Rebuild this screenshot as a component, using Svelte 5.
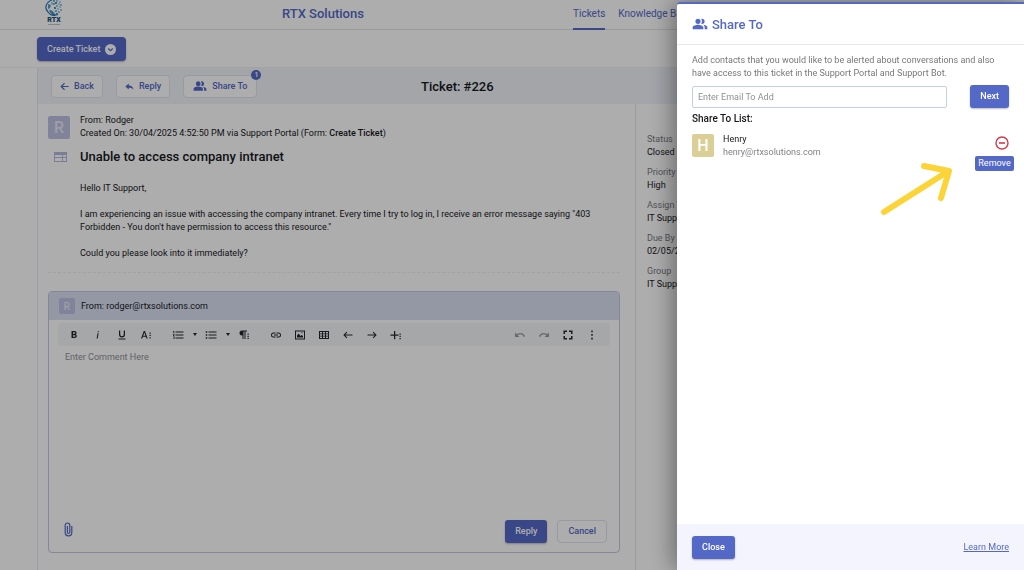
<script>
  const peoplePath =
    'M16.67 13.13C18.04 14.06 19 15.32 19 17v3h4v-3c0-2.18-3.57-3.47-6.33-3.87zM15 12c2.21 0 4-1.79 4-4s-1.79-4-4-4c-.47 0-.91.1-1.33.24C14.5 5.27 15 6.58 15 8s-.5 2.73-1.33 3.76c.42.14.86.24 1.33.24zM9 12c2.21 0 4-1.79 4-4s-1.79-4-4-4-4 1.79-4 4 1.79 4 4 4zm0 1c-2.67 0-8 1.34-8 4v3h16v-3c0-2.66-5.33-4-8-4z';

  const textTools = [
    { label: 'Bold', d: 'M15.6 10.8c1-.7 1.6-1.8 1.6-2.8 0-2.3-1.7-4-4-4H7v14h7c2.1 0 3.7-1.7 3.7-3.8 0-1.5-.9-2.8-2.1-3.4zM10 6.5h3a1.5 1.5 0 0 1 0 3h-3zm3.500 9H10v-3h3.500a1.500 1.500 0 0 1 0 3z' },
    { label: 'Italic', d: 'M11 8.500h2.200L11.400 19H9.200zM11.700 4.500h2.200l-.4 2.200h-2.200z' },
    { label: 'Underline', d: 'M12 17a6 6 0 0 0 6-6V3h-2.500v8a3.500 3.500 0 0 1-7 0V3H6v8a6 6 0 0 0 6 6zm-7 2v2h14v-2z' },
    { label: 'More text', d: 'M7.500 4 2 19h2.500l1.200-3.500h6L12.900 19h2.500L9.900 4zm-1 9.300 2.200-6.400 2.200 6.400zM19 7h2.500v2.500H19zm0 4.700h2.500v2.500H19zm0 4.700h2.500V19H19z' }
  ];
  const insertTools = [
    { label: 'Insert link', d: 'M3.900 12a3.100 3.100 0 0 1 3.100-3.100h4V7H7a5 5 0 0 0 0 10h4v-1.900H7A3.100 3.100 0 0 1 3.900 12zM8 13h8v-2H8zm9-6h-4v1.900h4a3.100 3.100 0 0 1 0 6.200h-4V17h4a5 5 0 0 0 0-10z' },
    { label: 'Insert image', d: 'M2 3v18h20V3zm18 16H4V5h16zM6 17h12v-3l-3-2-2 2-4-5-3 4zm9-8.500h2v-2h-2z' },
    { label: 'Insert table', d: 'M2 4v16h20V4zm2 2h4v3H4zm6 0h4v3h-4zm6 0h4v3h-4zM4 10.500h4v3H4zm6 0h4v3h-4zm6 0h4v3h-4zM4 15h4v3H4zm6 0h4v3h-4zm6 0h4v3h-4z' },
    { label: 'Left to right', d: 'M21 11H6.500l4-4L9 5.600 2.600 12 9 18.400l1.500-1.400-4-4H21z' },
    { label: 'Right to left', d: 'M3 11h14.500l-4-4L15 5.600l6.400 6.400-6.400 6.400-1.500-1.400 4-4H3z' },
    { label: 'More rich', d: 'M8 4h2.500v7H17v2.500h-6.500v7H8v-7H1V11h7zm11 5h2.500v2.500H19zm0 4.500h2.500V16H19zm0 4.500h2.500v2.500H19z' }
  ];
  const viewTools = [
    { label: 'Undo', faded: true, d: 'M12.500 8a10 10 0 0 0-6.600 2.600L2 7v9h9l-3.600-3.600A8 8 0 0 1 20 16l2.300-.8A10.500 10.500 0 0 0 12.500 8z' },
    { label: 'Redo', faded: true, d: 'M11.500 8a10 10 0 0 1 6.600 2.600L22 7v9h-9l3.600-3.600A8 8 0 0 0 4 16l-2.300-.8A10.500 10.500 0 0 1 11.500 8z' },
    { label: 'Full screen', d: 'M6 14H3v7h7v-3H6zM3 10h3V6h4V3H3zm15 8h-4v3h7v-7h-3zM14 3v3h4v4h3V3z' },
    { label: 'More', d: 'M10.500 3h3v3.500h-3zm0 7.200h3v3.500h-3zm0 7.300h3V21h-3z' }
  ];
  const olPath = 'M7 5h16v2H7zm0 6h16v2H7zm0 6h16v2H7zM2 4h2.500v5H3V5.500H2zm0 6h3v1.200L3.500 13H5v1H2v-1.200L3.500 11H2zm0 5h3v5H2v-1h2v-1H3v-1h1v-1H2z';
  const ulPath = 'M7 5h16v2H7zm0 6h16v2H7zm0 6h16v2H7zM1.500 4.500h3v3h-3zm0 6h3v3h-3zm0 6h3v3h-3z';
  const paraPath = 'M8 3a5 5 0 0 0 0 10h1v7h2V5h2v15h2V5h3V3zm11 6h2.500v2.500H19zm0 4.300h2.500v2.500H19zm0 4.200h2.500V20H19z';

  const facts = [
    ['Status', 'Closed'],
    ['Priority', 'High'],
    ['Assign To', 'IT Support'],
    ['Due By', '02/05/2025'],
    ['Group', 'IT Support']
  ];

  const logoDots = [
    [9, 1], [12, 1], [15, 2], [11, 3], [14, 4], [16, 5], [9, 4], [12, 6], [15, 7],
    [10, 8], [13, 9], [16, 10], [11, 11], [14, 12], [9, 13], [12, 14]
  ];

  let comment = $state('');
  let email = $state('');
</script>

{#snippet tool(t)}
  <button type="button" class="tool" class:faded={t.faded} aria-label={t.label}>
    <svg viewBox="0 0 24 24" width="12" height="12"><path d={t.d} fill="currentColor" /></svg>
  </button>
{/snippet}

{#snippet people(size)}
  <svg viewBox="0 0 24 24" width={size} height={size} aria-hidden="true"><path d={peoplePath} fill="currentColor" /></svg>
{/snippet}

<div class="page">
  <header class="site">
    <div class="logo">
      <svg viewBox="0 0 18 16" width="18" height="16" aria-hidden="true">
        <path d="M7 0C1 2-1 8 3 12c2 3 5 4 8 3-4-1-6-3-6-5" fill="none" stroke="#2879b0" stroke-width="1.200" />
        <path d="M3 4l3 1-1 3-2 1zM5 10l3 1 1 3-3-1zM6 2l2 1-1 2z" fill="#4f9dce" />
        {#each logoDots as [x, y], i}<circle cx={x} cy={y} r={i % 3 ? 0.8 : 1.1} fill={i % 2 ? '#2a78ad' : '#57a6d4'} />{/each}
      </svg>
      <span>RTX</span>
      <i></i>
    </div>
    <div class="brand">RTX Solutions</div>
    <nav>
      <a class="current" href="#tickets">Tickets</a>
      <a href="#kb">Knowledge Base</a>
    </nav>
  </header>

  <div class="create">
    <button class="btn primary">
      Create Ticket
      <svg viewBox="0 0 12 12" width="11" height="11" aria-hidden="true"><circle cx="6" cy="6" r="6" fill="#fff" /><path d="M3.500 5 6 7.300 8.500 5" fill="none" stroke="#5468c7" stroke-width="1.400" /></svg>
    </button>
  </div>

  <section class="ticket">
    <div class="bar">
      <div class="actions">
        <button class="btn plain">
          <svg viewBox="0 0 24 24" width="9" height="9" aria-hidden="true"><path d="M23 10.500H7l6-6L11 2 1 12l10 10 2-2.500-6-6h16z" fill="currentColor" /></svg>Back
        </button>
        <button class="btn plain">
          <svg viewBox="0 0 24 24" width="9" height="9" aria-hidden="true"><path d="M10 9V4l-9 8 9 8v-5c6 0 10 1 13 6-1-7-5-12-13-12z" fill="currentColor" /></svg>Reply
        </button>
        <button class="btn plain share">
          {@render people(14)}Share To<span class="count">1</span>
        </button>
      </div>
      <h1>Ticket: #226</h1>
    </div>

    <div class="columns">
      <main>
        <div class="message">
          <div class="avatar violet">R</div>
          <div class="meta">
            <p>From: Rodger</p>
            <p>Created On: 30/04/2025 4:52:50 PM via Support Portal (Form: <b>Create Ticket</b>)</p>
          </div>
          <svg class="window" viewBox="0 0 13 10" width="13" height="10" aria-hidden="true"><path d="M0 0h13v10H0zM1 3v2h7V3zm8 0v2h3V3zM1 6v3h7V6zm8 0v3h3V6z" fill="#b4b8de" fill-rule="evenodd" /></svg>
          <h2>Unable to access company intranet</h2>
          <div class="text">
            <p>Hello IT Support,</p>
            <p>I am experiencing an issue with accessing the company intranet. Every time I try to log in, I receive an error message saying "403 Forbidden - You don't have permission to access this resource."</p>
            <p>Could you please look into it immediately?</p>
          </div>
        </div>
        <form class="composer">
          <div class="from"><div class="avatar violet small">R</div>From: rodger@rtxsolutions.com</div>
          <div class="tools">
            <div class="group">{#each textTools as t}{@render tool(t)}{/each}</div>
            <div class="group lists">
              {@render tool({ label: 'Ordered list', d: olPath })}
              <button type="button" class="caret" aria-label="Ordered list styles"></button>
              {@render tool({ label: 'Unordered list', d: ulPath })}
              <button type="button" class="caret" aria-label="Unordered list styles"></button>
              {@render tool({ label: 'More paragraph', d: paraPath })}
            </div>
            <div class="group">{#each insertTools as t}{@render tool(t)}{/each}</div>
            <div class="group end">{#each viewTools as t}{@render tool(t)}{/each}</div>
          </div>
          <textarea aria-label="Comment" placeholder="Enter Comment Here" bind:value={comment}></textarea>
          <div class="send">
            <button type="button" class="clip" aria-label="Attach file">
              <svg viewBox="0 0 9 15" width="9" height="15"><path d="M7.800 4v6.500a3.300 3.300 0 0 1-6.600 0V3.300a2.300 2.300 0 0 1 4.600 0v7a1.200 1.200 0 0 1-2.400 0V4" fill="none" stroke="currentColor" stroke-width="1.200" /></svg>
            </button>
            <button type="button" class="btn primary">Reply</button>
            <button type="button" class="btn plain">Cancel</button>
          </div>
        </form>
      </main>
      <aside>
        <dl>
          {#each facts as [name, value]}
            <div><dt>{name}</dt><dd>{value}</dd></div>
          {/each}
        </dl>
      </aside>
    </div>
  </section>
</div>

<div class="backdrop"></div>

<div class="drawer" role="dialog" aria-labelledby="share-title">
  <header>{@render people(16)}<h2 id="share-title">Share To</h2></header>
  <div class="content">
    <p class="hint">Add contacts that you would like to be alerted about conversations and also have access to this ticket in the Support Portal and Support Bot.</p>
    <div class="add">
      <input type="email" aria-label="Email" placeholder="Enter Email To Add" bind:value={email} />
      <button class="btn primary">Next</button>
    </div>
    <h3>Share To List:</h3>
    <div class="contact">
      <div class="avatar sand">H</div>
      <div class="who"><p>Henry</p><p class="mail">henry@rtxsolutions.com</p></div>
      <button class="remove" aria-label="Remove Henry">
        <svg viewBox="0 0 14 14" width="14" height="14"><circle cx="7" cy="7" r="6" fill="none" stroke="#d63a45" stroke-width="1.400" /><path d="M4 7h6" stroke="#d63a45" stroke-width="1.600" /></svg>
        <span class="tip">Remove</span>
      </button>
    </div>
    <svg class="arrow" viewBox="0 0 76 56" width="76" height="56" aria-hidden="true"><path d="M6 51 69 11M46 5l25 5-8 27" fill="none" stroke="#fdd437" stroke-width="6" stroke-linecap="round" stroke-linejoin="round" /></svg>
  </div>
  <footer>
    <button class="btn primary">Close</button>
    <a href="#learn">Learn More</a>
  </footer>
</div>

<style>
  :global(body) {
    margin: 0;
    font: 9px/13px Roboto, sans-serif;
    color: #16181c;
    background: #fff;
  }
  :global(#app) { overflow-x: hidden; }
  * { box-sizing: border-box; }
  p, h1, h2, h3, dl, dd { margin: 0; }
  svg { display: block; flex: none; }
  button { font: inherit; color: inherit; background: none; border: 0; padding: 0; cursor: pointer; }
  a { color: #5468c7; }

  .page { display: flex; flex-direction: column; min-height: 100vh; }
  .site {
    display: grid;
    grid-template-columns: 245fr 291fr 414fr;
    height: 30px;
    padding: 0 37px;
    border-bottom: 1px solid #e4e4e8;
  }
  .logo {
    display: flex;
    flex-direction: column;
    align-items: center;
    width: 34px;
    color: #174e7c;
    font-size: 7px;
    line-height: 8px;
    font-weight: 900;
  }
  .logo i { width: 12px; height: 1px; background: #b8c6cc; }
  .brand { font-size: 13px; line-height: 28px; font-weight: 500; color: #5468c7; }
  nav { display: flex; gap: 13px; white-space: nowrap; }
  nav a { height: 30px; font-size: 10px; line-height: 27px; text-decoration: none; }
  .current { border-bottom: 2px solid #5468c7; }

  .create { padding: 7px 37px; border-bottom: 1px solid #f0f0f4; }
  .btn {
    display: flex;
    align-items: center;
    justify-content: center;
    gap: 5px;
    height: 23px;
    padding: 0 10px;
    border-radius: 3px;
    font-weight: 500;
    white-space: nowrap;
  }
  .primary { color: #fff; background: #5468c7; box-shadow: 0 1px 2px #0004; }
  .plain { color: #5468c7; background: #fff; border: 1px solid #e2e4ee; border-radius: 4px; }
  .create .btn { height: 24px; border-radius: 4px; margin-bottom: -1px; }

  .ticket { flex: 1; display: flex; flex-direction: column; margin: 0 37px; border-left: 1px solid #e4e6f0; }
  .bar {
    display: grid;
    grid-template-columns: 383fr 566fr;
    align-items: center;
    height: 36px;
    background: #f0f3fa;
  }
  .actions { display: flex; gap: 13px; padding-left: 13px; }
  .actions .btn { padding: 0 8px; }
  .actions .share { position: relative; padding: 0 9px; }
  .count {
    position: absolute;
    top: -6px;
    right: -5px;
    width: 10px;
    font-size: 7px;
    line-height: 10px;
    color: #fff;
    background: #5468c7;
    border-radius: 50%;
  }
  h1 { font-size: 13px; font-weight: 500; }
  .columns { flex: 1; display: grid; grid-template-columns: 598fr 351fr; }
  main { display: flex; flex-direction: column; padding: 10px 15px 17px 10px; border-right: 1px solid #e4e6f0; }
  .message {
    display: grid;
    grid-template-columns: 22px 1fr;
    column-gap: 10px;
    padding-bottom: 12px;
    border-bottom: 1px dashed #eeeff3;
  }
  .avatar {
    display: grid;
    place-items: center;
    width: 22px;
    height: 23px;
    border-radius: 2px;
    color: #fff;
    font-size: 16px;
    font-weight: 500;
  }
  .message > .avatar { margin-top: 2px; }
  .violet { background: #bfc1e3; color: #e8e9f6; }
  .sand { background: #dacf97; margin-top: 1px; }
  .small { width: 16px; height: 16px; font-size: 10px; }
  .meta b { font-weight: 500; }
  .window { justify-self: end; align-self: center; margin: 6px 3px 0 0; }
  .message h2 { margin-top: 6px; font-size: 13px; line-height: 22px; font-weight: 500; }
  .text { grid-column: 2; display: grid; gap: 13px; padding-right: 16px; padding-top: 14px; }

  .composer {
    flex: 1;
    display: flex;
    flex-direction: column;
    margin-top: 18px;
    border: 1px solid #c3c8e2;
    border-radius: 4px;
    overflow: hidden;
  }
  .from {
    display: flex;
    align-items: center;
    gap: 6px;
    height: 28px;
    padding: 0 10px;
    background: #dbe1f4;
  }
  .tools { display: flex; gap: 9px; margin: 3px 9px 0; padding: 0 6px 0 4px; background: #f4f6fa; border-radius: 3px; }
  .group { display: flex; }
  .end { margin-left: auto; }
  .tool { display: grid; place-items: center; width: 24px; height: 23px; color: #24272d; }
  .lists .tool { width: 22px; }
  .faded { color: #9a9da3; }
  .caret { display: grid; place-items: center; width: 11px; }
  .caret::before { content: ''; border: 2px solid transparent; border-top: 3px solid #24272d; border-bottom: 0; }
  textarea {
    flex: 1;
    padding: 5px 16px;
    border: 0;
    outline: 0;
    resize: none;
    font: inherit;
    background: none;
  }
  ::placeholder { color: #8e9095; opacity: 1; }
  .send { display: flex; align-items: center; gap: 10px; padding: 0 12px 9px 15px; }
  .clip { margin: 0 auto 4px 0; color: #5468c7; }

  aside { padding: 29px 11px; }
  dl { display: grid; gap: 7px; }
  dt { color: #777a80; }

  .backdrop { position: fixed; inset: 0; background: rgba(0, 0, 0, 0.32); }
  .drawer {
    position: fixed;
    top: 2px;
    right: 0;
    bottom: 0;
    display: flex;
    flex-direction: column;
    width: 347px;
    max-width: 100%;
    background: #fff;
    border-top: 2px solid #5468c7;
    border-radius: 3px 0 0 0;
    box-shadow: -4px 0 24px #0006;
  }
  .drawer header {
    display: flex;
    align-items: center;
    gap: 4px;
    height: 41px;
    padding: 0 15px;
    color: #5468c7;
    border-bottom: 1px solid #e6e7ea;
  }
  .drawer h2 { font-size: 13px; font-weight: 500; }
  .content { position: relative; flex: 1; padding: 9px 15px; }
  .hint { color: #777; }
  .add { display: flex; align-items: center; gap: 23px; margin-top: 5px; }
  input {
    flex: 1;
    min-width: 0;
    height: 22px;
    padding: 0 5px;
    border: 1px solid #c6cfdf;
    border-radius: 2px;
    outline: 0;
    font: inherit;
  }
  h3 { margin-top: 4px; font-size: 10px; line-height: 14px; font-weight: 500; }
  .contact { display: flex; gap: 9px; margin-top: 7px; }
  .who { flex: 1; }
  .mail { color: #808286; }
  .remove { position: relative; align-self: flex-start; margin-top: 3px; }
  .tip {
    position: absolute;
    top: 20px;
    right: -5px;
    width: 39px;
    height: 15px;
    line-height: 15px;
    color: #fff;
    background: #5468c7;
    border-radius: 2px;
  }
  .arrow { position: absolute; top: 116px; right: 70px; }
  footer {
    display: flex;
    align-items: center;
    justify-content: space-between;
    height: 46px;
    padding: 0 15px;
    background: #f3f4fe;
  }
</style>
